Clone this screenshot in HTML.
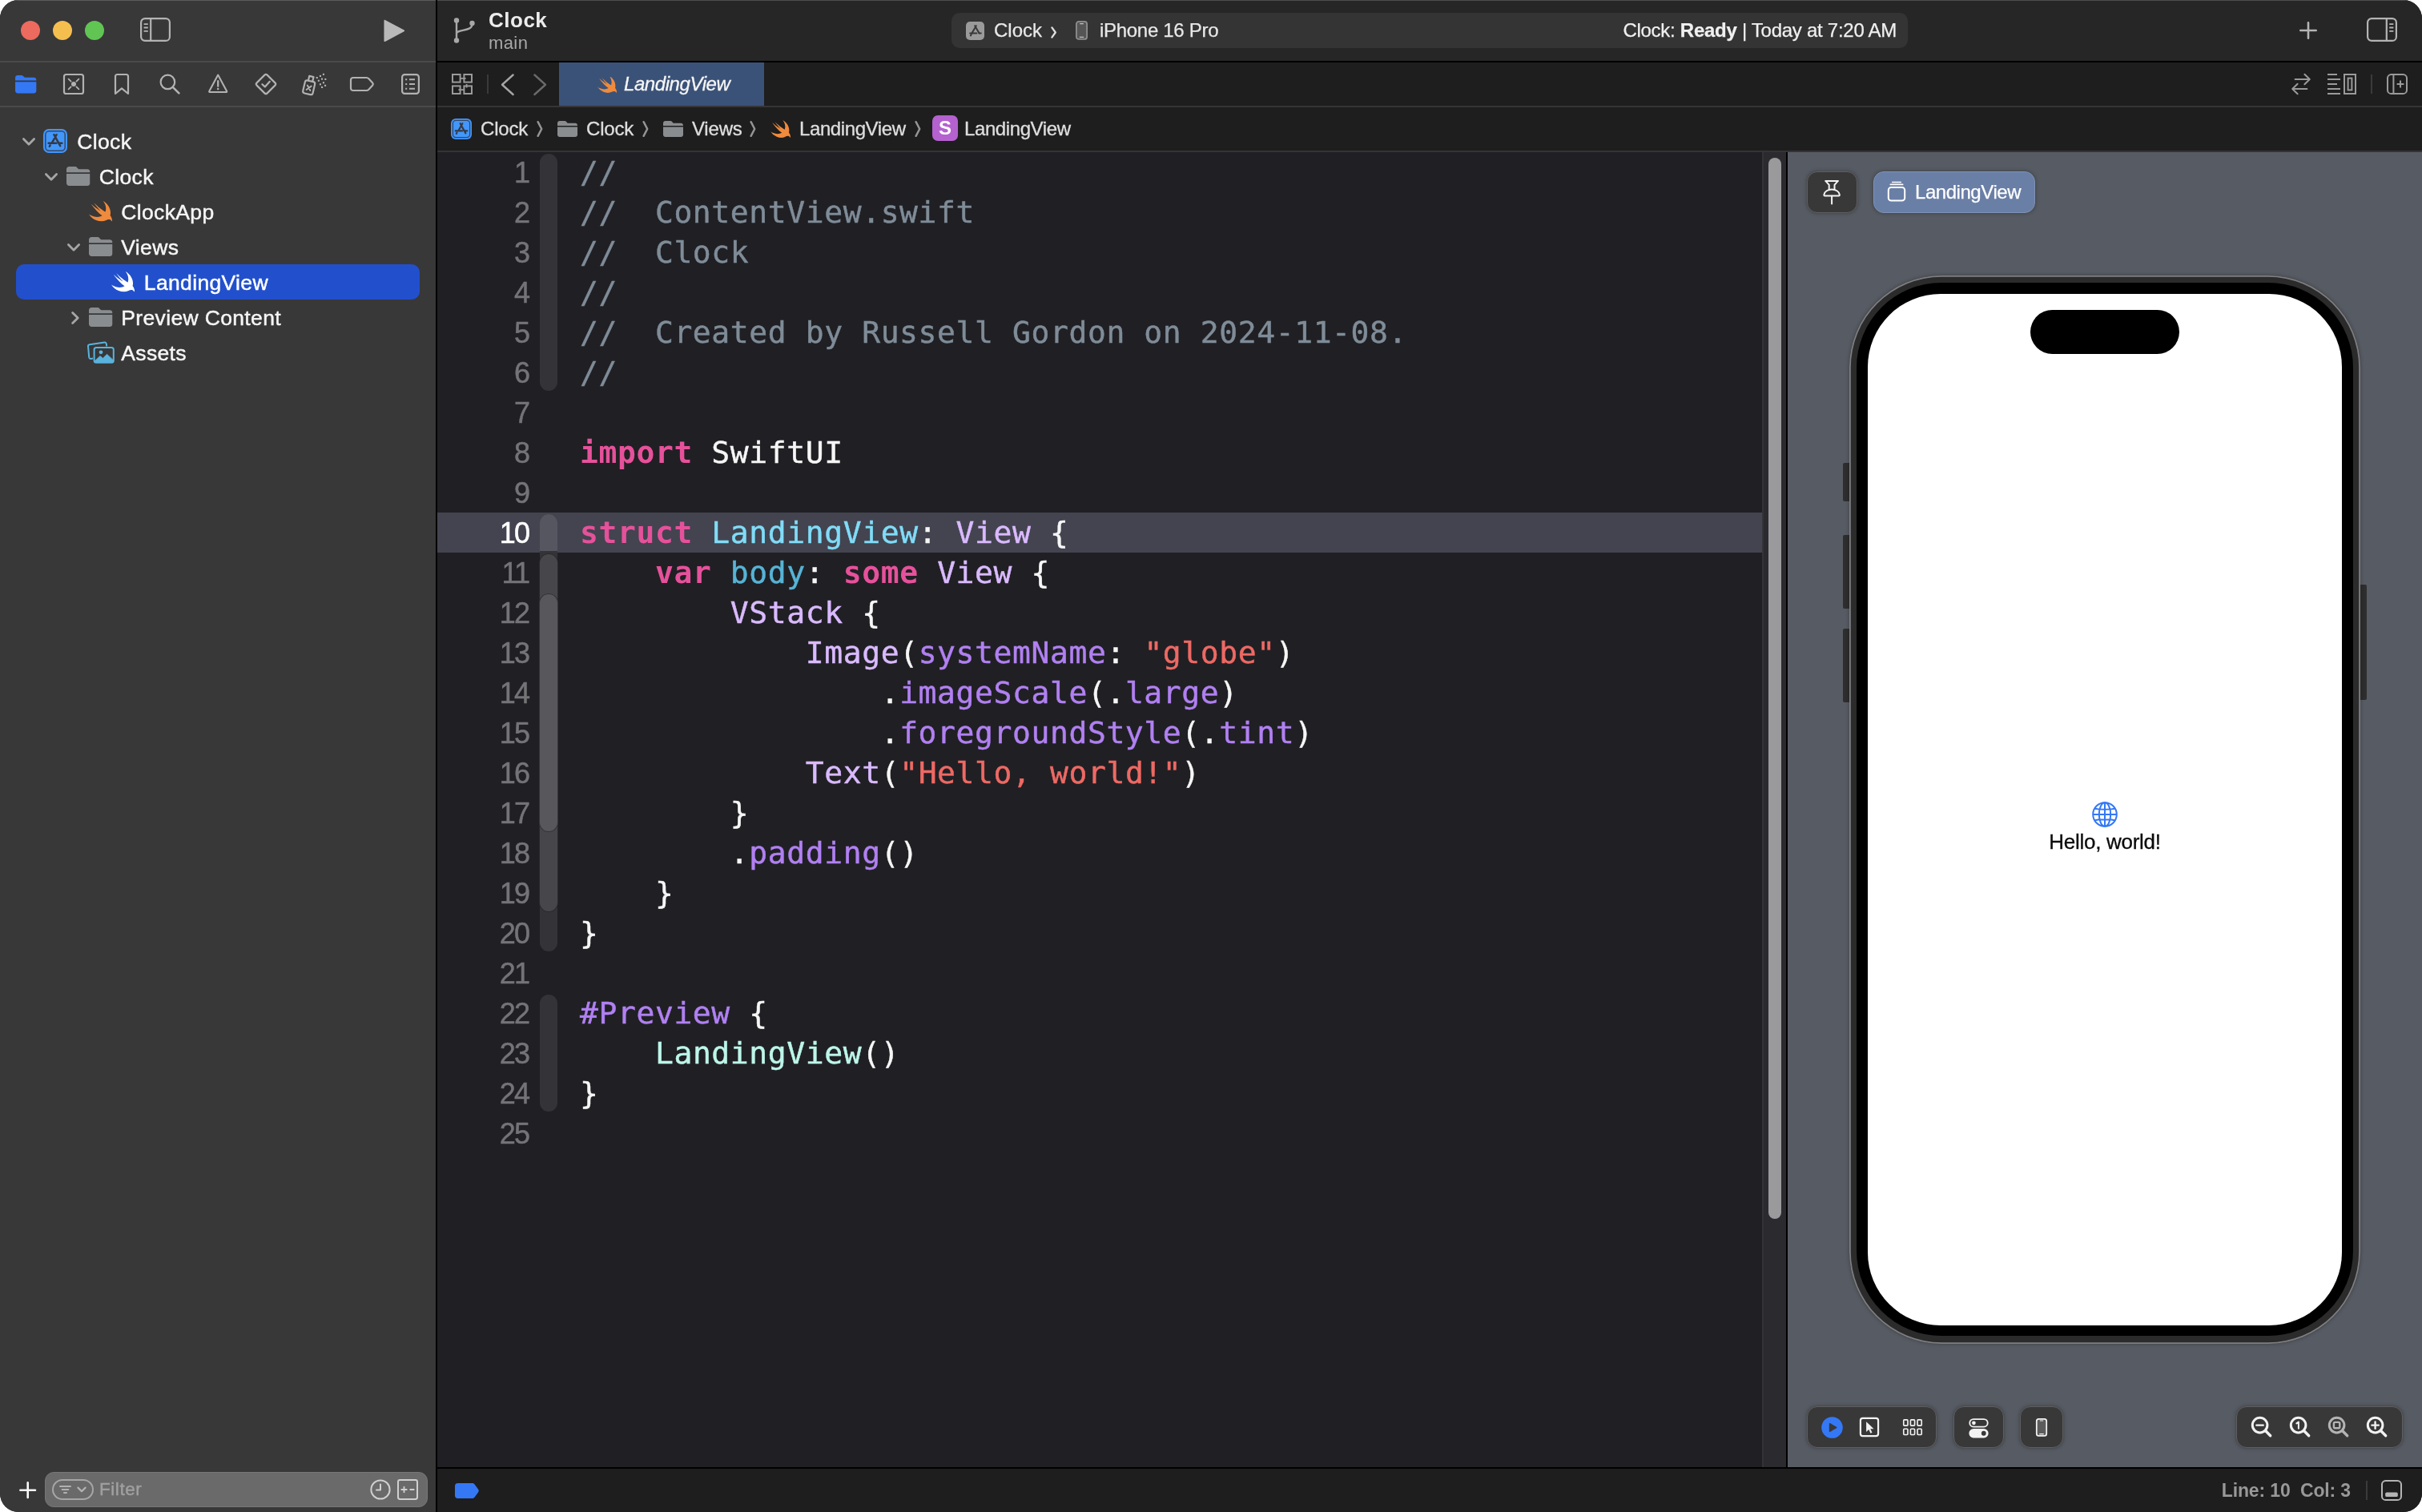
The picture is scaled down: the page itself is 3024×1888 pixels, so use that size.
<!DOCTYPE html>
<html lang="en">
<head>
<meta charset="utf-8">
<title>Clock — LandingView.swift</title>
<style>
*{box-sizing:border-box;margin:0;padding:0}
html,body{width:3024px;height:1888px;background:#fff}
body{overflow:hidden;position:relative}
body{font-family:"Liberation Sans",sans-serif;color:#e6e6e6;-webkit-font-smoothing:antialiased}
#win{will-change:transform;position:absolute;left:0;top:0;width:3024px;height:1888px;border-radius:23px;overflow:hidden;background:#1f1f24}
.abs{position:absolute}
svg{position:absolute;overflow:visible}
/* ---------- sidebar ---------- */
#sidebar{position:absolute;left:0;top:0;width:544px;height:1888px;background:#383838}
#vdiv{position:absolute;left:544px;top:0;width:2px;height:1888px;background:#000}
.hl{position:absolute;height:2px}
.tl{position:absolute;border-radius:50%;width:24px;height:24px;top:26px}
.row{position:absolute;left:0;width:544px;height:44px;font-size:26.5px;line-height:44px;color:#ececec;white-space:nowrap;letter-spacing:0.35px;-webkit-text-stroke:0.45px}
.row span{position:absolute;top:1px}
/* ---------- main ---------- */
#toolbar{position:absolute;left:546px;top:0;width:2478px;height:76px;background:#262626}
#tabbar{position:absolute;left:546px;top:78px;width:2478px;height:54px;background:#1e1e1e}
#crumbs{position:absolute;left:546px;top:134px;width:2478px;height:54px;background:#1e1e1e}
#editor{position:absolute;left:546px;top:190px;width:1654px;height:1642px;background:#202024;overflow:hidden}
#scroll{position:absolute;left:2200px;top:190px;width:30px;height:1642px;background:#2b2b2f;border-left:2px solid #343438}
#thumb{position:absolute;left:2208px;top:197px;width:16px;height:1325px;border-radius:8px;background:#9a9a9d}
#vdiv2{position:absolute;left:2230px;top:190px;width:2px;height:1642px;background:#000}
#canvas{position:absolute;left:2232px;top:190px;width:792px;height:1642px;background:#575b63;overflow:hidden}
#status{position:absolute;left:546px;top:1832px;width:2478px;height:56px;background:#1e1e1e;border-top:2px solid #000}
.cr{position:absolute;top:11px;font-size:24px;line-height:32px;color:#dedede;white-space:nowrap;letter-spacing:-0.2px;-webkit-text-stroke:0.35px}
.cv{position:absolute;top:17px;width:8px;height:20px}
.rb{position:absolute;left:128px;width:22px;border-radius:11px}
.cbtn{position:absolute;border-radius:13px;background:#383838;border:1px solid #5e5e5f;box-shadow:0 0 5px rgba(0,0,0,.35)}
.ln.cur i{color:#fff;-webkit-text-stroke-color:#fff}
/* code */
.ln{position:absolute;left:0;width:1654px;height:50px;white-space:pre;font-family:"DejaVu Sans Mono","Liberation Mono",monospace;font-size:38px;line-height:50px;color:#f6f6f6}
.ln i{position:absolute;left:0;top:1px;width:114.2px;text-align:right;letter-spacing:-1.8px;font-style:normal;font-family:"Liberation Sans",sans-serif;font-size:36px;color:#747478;-webkit-text-stroke:0.5px #747478}
.ln b{position:absolute;left:178px;top:0;font-weight:normal;letter-spacing:0.6px;-webkit-text-stroke:0.45px}
.k{color:#e6519b;font-weight:bold;-webkit-text-stroke:0}
.c{color:#7f8c98}
.t{color:#80dcf8}
.d{color:#56b4d6}
.s{color:#dabaff}
.f{color:#b180f2}
.q{color:#ee6964}
.p{color:#bdf6ea}
</style>
</head>
<body>
<div id="win">
<svg width="0" height="0" style="position:absolute">
  <defs>
    <symbol id="swift" viewBox="2.41 3.41 18.12 16.22" preserveAspectRatio="none">
      <path d="M13.543 3.41c4.114 2.47 6.545 7.162 5.549 11.131-.024.093-.05.181-.076.272l.002.001c2.062 2.538 1.5 5.258 1.236 4.745-1.072-2.086-3.066-1.568-4.088-1.043a6.803 6.803 0 0 1-.281.158l-.02.012-.002.002c-2.115 1.123-4.957 1.205-7.812-.022a12.568 12.568 0 0 1-5.64-4.838c.649.48 1.35.902 2.097 1.252 3.019 1.414 6.051 1.311 8.197-.002C9.651 12.73 7.101 9.67 5.146 7.191a10.628 10.628 0 0 1-1.005-1.384c2.34 2.142 6.038 4.83 7.365 5.576C8.69 8.408 6.208 4.743 6.324 4.86c4.436 4.47 8.528 6.996 8.528 6.996.154.085.27.154.36.213.085-.215.16-.437.224-.668.708-2.588-.09-5.548-1.893-7.992z"/>
    </symbol>
    <symbol id="folder" viewBox="0 0 30 24" preserveAspectRatio="none">
      <path d="M0 3.4C0 1.5 1.5 0 3.4 0H10.6C11.9 0 12.8 .5 13.6 1.4L14.6 2.6C15 3 15.4 3.2 16 3.2H26.6C28.5 3.2 30 4.7 30 6.6V7.2H0Z"/>
      <path d="M0 9H30V20.6C30 22.5 28.5 24 26.6 24H3.4C1.5 24 0 22.5 0 20.6Z"/>
    </symbol>
    <symbol id="appicon" viewBox="0 0 30 30">
      <rect x="0" y="0" width="30" height="30" rx="7" fill="#4196fb"/>
      <rect x="2.8" y="2.8" width="24.4" height="24.4" rx="4.4" fill="#4297fb" stroke="#354766" stroke-width="1.5"/>
      <path d="M16.6 7.2L10.6 17.8M13.4 7.2L21.2 21.2M6.6 17.8H16.4M19.8 17.8H23.4M8.6 20.4L7.8 21.8" fill="none" stroke="#353a44" stroke-width="2.5" stroke-linecap="round"/>
    </symbol>
  </defs>
</svg>
<div id="sidebar">
  <div class="hl" style="left:0;top:0;width:544px;height:1px;background:#5c5c5c"></div>
  <div class="tl" style="left:26px;background:#ed6a5e"></div>
  <div class="tl" style="left:66px;background:#f5bf4f"></div>
  <div class="tl" style="left:106px;background:#61c554"></div>
  <!-- sidebar toggle -->
  <svg style="left:175.2px;top:22px" width="38" height="30" viewBox="0 0 38 30" fill="none" stroke="#b4b4b4" stroke-width="2.2">
    <rect x="1.1" y="1.1" width="35.8" height="27.8" rx="5"/>
    <path d="M13.2 1.1V28.9"/>
    <path d="M4.6 8.2h5.2M4.6 12.5h5.2M4.6 16.8h5.2" stroke-width="1.8"/>
  </svg>
  <!-- run -->
  <svg style="left:478.6px;top:23.6px" width="26.6" height="28.8" viewBox="0 0 28 29" preserveAspectRatio="none"><path d="M1.5 1.8L26.5 14.5L1.5 27.2Z" fill="#b9b9b9" stroke="#b9b9b9" stroke-width="2" stroke-linejoin="round"/></svg>
  <div class="hl" style="left:0;top:76px;width:544px;background:#4a4a4a"></div>
  <!-- navigator icons -->
  <svg style="left:19px;top:94px" width="26.4" height="22.4" viewBox="0 0 27 23"><path d="M0 3.2C0 1.3 1.3 0 3.2 0H7.6C8.8 0 9.6 .4 10.4 1.2L11.2 2C11.8 2.6 12.4 2.8 13.2 2.8H23.8C25.7 2.8 27 4.1 27 6V6.6H0Z" fill="#3478f6"/><path d="M0 8.6H27V19.8C27 21.7 25.7 23 23.8 23H3.2C1.3 23 0 21.7 0 19.8Z" fill="#3478f6"/></svg>
  <svg style="left:79px;top:92px" width="26" height="26" viewBox="0 0 26 26" fill="none" stroke="#b2b2b2" stroke-width="2.2" stroke-linecap="round">
    <rect x="1" y="1" width="24" height="24" rx="2.6"/><circle cx="13" cy="13" r="3" fill="#b2b2b2" stroke="none"/>
    <path d="M6.6 6.6L9.6 9.6M19.4 6.6L16.4 9.6M6.6 19.4L9.6 16.4M19.4 19.4L16.4 16.4" stroke-width="1.8"/>
  </svg>
  <svg style="left:143px;top:92px" width="18" height="26" viewBox="0 0 18 26" fill="none" stroke="#b2b2b2" stroke-width="2.2" stroke-linejoin="round"><path d="M1 3.4C1 2 2 1 3.4 1H14.6C16 1 17 2 17 3.4V25L9 18.4L1 25Z"/></svg>
  <svg style="left:199px;top:92px" width="26" height="26" viewBox="0 0 26 26" fill="none" stroke="#b2b2b2" stroke-width="2.2" stroke-linecap="round"><circle cx="10.4" cy="10.4" r="8.8"/><path d="M16.8 16.8L24.4 24.4" stroke-width="2.6"/></svg>
  <svg style="left:260px;top:92px" width="24.4" height="24.4" viewBox="0 0 26 25" preserveAspectRatio="none" fill="none" stroke="#b2b2b2" stroke-width="2.2" stroke-linejoin="round" stroke-linecap="round"><path d="M13 1.6L24.6 22.2C25 23 24.6 23.6 23.8 23.6H2.2C1.4 23.6 1 23 1.4 22.2Z"/><path d="M13 9.4V16" stroke-width="2.4"/><circle cx="13" cy="19.6" r="1.3" fill="#b2b2b2" stroke="none"/></svg>
  <svg style="left:318px;top:91px" width="28" height="28" viewBox="0 0 28 28" fill="none" stroke="#b2b2b2" stroke-width="2.2" stroke-linejoin="round" stroke-linecap="round"><path d="M12.4 2.6Q14 1 15.6 2.6L25.4 12.4Q27 14 25.4 15.6L15.6 25.4Q14 27 12.4 25.4L2.6 15.6Q1 14 2.6 12.4Z"/><path d="M9.4 14.2L12.8 17.4L18.8 10.8"/></svg>
  <svg style="left:376px;top:90px" width="34" height="32" viewBox="0 0 34 32" fill="none" stroke="#b2b2b2" stroke-width="2.2" stroke-linejoin="round" stroke-linecap="round">
    <g transform="translate(9.7 19.3) rotate(13)"><rect x="-6.3" y="-8.2" width="12.6" height="16.4" rx="2.6"/><path d="M-2.7 -8.4V-14.2H2.7V-8.4"/><path d="M-2.5 -2.3L2.5 3.3M2.5 -2.3L-2.5 3.3" stroke-width="1.9"/></g>
    <g fill="#b2b2b2" stroke="none"><rect x="26.9" y="1.8" width="2.1" height="2.1"/><rect x="22.9" y="3.9" width="2.1" height="2.1"/><rect x="18.7" y="6.0" width="2.1" height="2.1"/><rect x="25.0" y="7.6" width="2.1" height="2.1"/><rect x="29.3" y="7.9" width="2.1" height="2.1"/><rect x="20.8" y="9.7" width="2.1" height="2.1"/><rect x="26.9" y="12.2" width="2.1" height="2.1"/><rect x="22.9" y="14.3" width="2.1" height="2.1"/><rect x="29.0" y="15.8" width="2.1" height="2.1"/><rect x="25.0" y="17.9" width="2.1" height="2.1"/></g>
  </svg>
  <svg style="left:437px;top:96px" width="30" height="18" viewBox="0 0 30 18" fill="none" stroke="#b2b2b2" stroke-width="2.2" stroke-linejoin="round"><path d="M4 1H20.6C21.8 1 22.6 1.4 23.4 2.2L28.2 7.4C29 8.4 29 9.6 28.2 10.6L23.4 15.8C22.6 16.6 21.8 17 20.6 17H4C2.2 17 1 15.8 1 14V4C1 2.2 2.2 1 4 1Z"/></svg>
  <svg style="left:501px;top:92px" width="23" height="26" viewBox="0 0 23 26" fill="none" stroke="#b2b2b2" stroke-width="2.2" stroke-linecap="round"><rect x="1.1" y="1.1" width="20.8" height="23.8" rx="3.2"/><path d="M10 7.2H17M10 13H17M10 18.8H17" stroke-width="2" stroke-linecap="butt"/><path d="M5.2 7.2H7.2M5.2 13H7.2M5.2 18.8H7.2" stroke-width="2" stroke-linecap="butt"/></svg>
  <div class="hl" style="left:0;top:132px;width:544px;background:#4a4a4a"></div>
  <!-- project tree -->
  <div class="abs" style="left:20px;top:330px;width:504px;height:44px;border-radius:10px;background:#2250cc"></div>
  <div class="row" style="top:154px">
    <svg style="left:28px;top:18.4px" width="16" height="10" viewBox="0 0 16 10" fill="none" stroke="#a6a6a6" stroke-width="2.8" stroke-linecap="round" stroke-linejoin="round"><path d="M1.4 1.6L8 8.2L14.6 1.6"/></svg>
    <svg style="left:54px;top:7px" width="30" height="30" viewBox="0 0 30 30"><use href="#appicon" width="30" height="30"/></svg>
    <span style="left:96.3px;color:#f6f6f6">Clock</span>
  </div>
  <div class="row" style="top:198px">
    <svg style="left:56px;top:18.4px" width="16" height="10" viewBox="0 0 16 10" fill="none" stroke="#a6a6a6" stroke-width="2.8" stroke-linecap="round" stroke-linejoin="round"><path d="M1.4 1.6L8 8.2L14.6 1.6"/></svg>
    <svg style="left:83px;top:10px" width="29.5" height="24" viewBox="0 0 29.5 24"><use href="#folder" width="29.5" height="24" fill="#8a8d90"/></svg>
    <span style="left:123.8px;color:#f6f6f6">Clock</span>
  </div>
  <div class="row" style="top:242px">
    <svg style="left:111px;top:9px" width="29" height="25.5" viewBox="0 0 29 25.5"><use href="#swift" width="29" height="25.5" fill="#f08a3c"/></svg>
    <span style="left:151.3px;color:#f6f6f6">ClockApp</span>
  </div>
  <div class="row" style="top:286px">
    <svg style="left:84px;top:18.4px" width="16" height="10" viewBox="0 0 16 10" fill="none" stroke="#a6a6a6" stroke-width="2.8" stroke-linecap="round" stroke-linejoin="round"><path d="M1.4 1.6L8 8.2L14.6 1.6"/></svg>
    <svg style="left:110.5px;top:10px" width="29.5" height="24" viewBox="0 0 29.5 24"><use href="#folder" width="29.5" height="24" fill="#8a8d90"/></svg>
    <span style="left:151.3px;color:#f6f6f6">Views</span>
  </div>
  <div class="row" style="top:330px">
    <svg style="left:139px;top:9px" width="29" height="25.5" viewBox="0 0 29 25.5"><use href="#swift" width="29" height="25.5" fill="#fff"/></svg>
    <span style="left:179.8px;color:#fff">LandingView</span>
  </div>
  <div class="row" style="top:374px">
    <svg style="left:89px;top:14.6px" width="10" height="16" viewBox="0 0 10 16" fill="none" stroke="#a6a6a6" stroke-width="2.8" stroke-linecap="round" stroke-linejoin="round"><path d="M1.6 1.4L8.2 8L1.6 14.6"/></svg>
    <svg style="left:110.5px;top:10px" width="29.5" height="24" viewBox="0 0 29.5 24"><use href="#folder" width="29.5" height="24" fill="#8a8d90"/></svg>
    <span style="left:151.3px;color:#f6f6f6">Preview Content</span>
  </div>
  <div class="row" style="top:418px">
    <svg style="left:109px;top:8px" width="34" height="28" viewBox="0 0 34 28" fill="none" stroke="#5ab3dd" stroke-width="2" stroke-linejoin="round">
      <path d="M7 21.6L4.4 21.9C3.2 22 2.4 21.4 2.2 20.2L1 6.4C.9 5.2 1.6 4.4 2.8 4.2L21.6 1.6C22.8 1.5 23.6 2.1 23.8 3.3L24.2 6.4"/>
      <rect x="8.6" y="8" width="24.2" height="18.8" rx="2.6"/>
      <path d="M9.6 24.6L16 18.6L19.4 21.4L24.6 16.4L32 23.4V24.4C32 25.8 31.4 26.2 30 26.2H11.4C10.2 26.2 9.6 25.6 9.6 24.6Z" fill="#5ab3dd" stroke-width="1"/>
      <circle cx="17" cy="13.8" r="2.4" fill="#5ab3dd" stroke="none"/>
    </svg>
    <span style="left:151.3px;color:#f6f6f6">Assets</span>
  </div>
  <!-- bottom filter bar -->
  <svg style="left:23.8px;top:1849.8px" width="21.4" height="21.4" viewBox="0 0 21.4 21.4" fill="none" stroke="#fafafa" stroke-width="2.6" stroke-linecap="round"><path d="M10.7 1.4V20M1.4 10.7H20"/></svg>
  <div class="abs" style="left:56px;top:1838px;width:478px;height:44px;border-radius:11px;background:#6a6a6a;border:1px solid #777"></div>
  <div class="abs" style="left:65px;top:1847px;width:52px;height:26px;border-radius:13px;border:2px solid #a6a6a6"></div>
  <svg style="left:74px;top:1853px" width="36" height="14" viewBox="0 0 36 14" fill="none" stroke="#b2b2b2" stroke-width="2" stroke-linecap="round" stroke-linejoin="round"><path d="M1 3H14M3.6 7H11.4M6 11H9"/><path d="M23.4 4.6L28 9.2L32.6 4.6" stroke-width="2.2"/></svg>
  <div class="abs" style="left:124px;top:1843.5px;font-size:22.5px;line-height:32px;color:#a0a0a0;letter-spacing:0.55px;-webkit-text-stroke:0.4px">Filter</div>
  <svg style="left:462px;top:1847px" width="26" height="26" viewBox="0 0 26 26" fill="none" stroke="#d0d0d0" stroke-width="2" stroke-linecap="round" stroke-linejoin="round"><circle cx="13" cy="13" r="11.6"/><path d="M13 6.4V13.4H8"/></svg>
  <svg style="left:496px;top:1847px" width="26" height="26" viewBox="0 0 26 26" fill="none" stroke="#d0d0d0" stroke-width="2"><rect x="1" y="1" width="24" height="24" rx="2.4"/><path d="M4.6 13H12.4M8.5 9.1V16.9M15.6 13H21.4" stroke-width="1.8"/></svg>
</div>
<div id="vdiv"></div>
<div id="toolbar">
  <div class="hl" style="left:0;top:0;width:2478px;height:1px;background:#4e4e4e"></div>
  <!-- branch icon -->
  <svg style="left:19px;top:20px" width="30" height="36" viewBox="0 0 30 36" fill="none" stroke="#a8a8a8" stroke-width="2.4">
    <circle cx="5" cy="5.5" r="3.2" fill="#a8a8a8" stroke="none"/>
    <circle cx="5" cy="30.5" r="3.2" fill="#a8a8a8" stroke="none"/>
    <circle cx="24.5" cy="9" r="3.2" fill="#a8a8a8" stroke="none"/>
    <path d="M5 6V30M5 22C5 16 24.5 20 24.5 10"/>
  </svg>
  <div class="abs" style="left:64px;top:9px;font-size:26px;line-height:32px;font-weight:bold;color:#ececec;letter-spacing:0.5px">Clock</div>
  <div class="abs" style="left:64px;top:40px;font-size:22px;line-height:28px;color:#a8a8a8;letter-spacing:0.4px">main</div>
  <!-- scheme pill -->
  <div class="abs" style="left:642px;top:16px;width:1194px;height:44px;border-radius:10px;background:#343434"></div>
  <div class="abs" style="left:660px;top:27px;width:23px;height:23px;border-radius:5px;background:#9a9a9a"></div>
  <svg style="left:662.5px;top:29px" width="18" height="18" viewBox="0 0 18 18" fill="none" stroke="#383838" stroke-width="2" stroke-linecap="round">
    <path d="M9.8 3.2L4.4 12.6M8.2 3.2L13.6 12.6M2.2 12.6H10.4M13.2 12.6H15.8M3.6 14.2L2.9 15.4"/>
  </svg>
  <div class="abs" style="left:695px;top:22px;font-size:24px;line-height:32px;color:#e8e8e8;-webkit-text-stroke:0.25px">Clock</div>
  <svg style="left:766px;top:32.6px" width="8" height="15" viewBox="0 0 8 15" fill="none" stroke="#e0e0e0" stroke-width="2.3" stroke-linecap="round" stroke-linejoin="round"><path d="M1.4 1.4L5.8 7.5L1.4 13.6"/></svg>
  <svg style="left:797px;top:26.4px" width="15" height="24" viewBox="0 0 15 24" fill="none">
    <rect x=".9" y=".9" width="13.2" height="22" rx="3" fill="#555" stroke="#8e8e8e" stroke-width="1.8"/>
    <path d="M5.2 3.6h4.6M4.8 20.4h5.4" stroke="#c4c4c4" stroke-width="1.2"/>
  </svg>
  <div class="abs" style="left:827px;top:22px;font-size:24px;line-height:32px;color:#e8e8e8;letter-spacing:-0.3px;-webkit-text-stroke:0.25px">iPhone 16 Pro</div>
  <div class="abs" style="left:1422px;top:22px;width:400px;text-align:right;font-size:24px;line-height:32px;color:#f0f0f0;white-space:nowrap;letter-spacing:-0.27px;-webkit-text-stroke:0.25px">Clock: <b>Ready</b> | Today at 7:20 AM</div>
  <!-- plus -->
  <svg style="left:2325px;top:27px" width="22" height="22" viewBox="0 0 22 22" fill="none" stroke="#b4b4b4" stroke-width="2.6" stroke-linecap="round"><path d="M11 1.3V20.7M1.3 11H20.7"/></svg>
  <!-- right panel toggle -->
  <svg style="left:2409px;top:22px" width="38" height="30" viewBox="0 0 38 30" fill="none" stroke="#b4b4b4" stroke-width="2.2">
    <rect x="1.1" y="1.1" width="35.8" height="27.8" rx="5"/>
    <path d="M24.8 1.1V28.9"/>
    <path d="M28.2 8.2h5.2M28.2 12.5h5.2M28.2 16.8h5.2" stroke-width="1.8"/>
  </svg>
</div>
<div class="hl" style="left:546px;top:76px;width:2478px;background:#000"></div>
<div id="tabbar">
  <!-- grid / related items icon -->
  <svg style="left:18px;top:14px" width="26" height="26" viewBox="0 0 26 26" fill="none" stroke="#9a9a9a" stroke-width="2">
    <rect x="1" y="1" width="9.6" height="9.6"/><rect x="15.4" y="1" width="9.6" height="9.6"/>
    <rect x="1" y="15.4" width="9.6" height="9.6"/><rect x="15.4" y="15.4" width="9.6" height="9.6"/>
    <path d="M10.6 5.8H17.6M8.4 20.2H15.4M18.6 13V17.6" stroke-width="1.8"/>
  </svg>
  <div class="abs" style="left:62px;top:15px;width:2px;height:24px;background:#3a3a3a"></div>
  <svg style="left:79px;top:13.6px" width="18" height="27.4" viewBox="0 0 18 26" preserveAspectRatio="none" fill="none" stroke="#a6a6a6" stroke-width="2.4" stroke-linecap="round" stroke-linejoin="round"><path d="M15.6 1.4L2 13L15.6 24.6"/></svg>
  <svg style="left:119px;top:13.6px" width="18" height="27.4" viewBox="0 0 18 26" preserveAspectRatio="none" fill="none" stroke="#6a6a6a" stroke-width="2.4" stroke-linecap="round" stroke-linejoin="round"><path d="M2.4 1.4L16 13L2.4 24.6"/></svg>
  <!-- active tab -->
  <div class="abs" style="left:152px;top:0;width:256px;height:54px;background:#3b5278"></div>
  <svg style="left:200px;top:17px" width="24" height="21" viewBox="0 0 24 21"><use href="#swift" width="24" height="21" fill="#f08a3c"/></svg>
  <div class="abs" style="left:233px;top:11px;font-size:24px;line-height:32px;font-style:italic;color:#f6f6f6;letter-spacing:-0.42px;-webkit-text-stroke:0.3px">LandingView</div>
  <!-- right icons -->
  <svg style="left:2314px;top:14px" width="26" height="26" viewBox="0 0 26 26" fill="none" stroke="#9a9a9a" stroke-width="2" stroke-linecap="round" stroke-linejoin="round">
    <path d="M5.6 7H23.6M17.4 .8L23.8 7L17.4 13.2M20.4 19H2.4M8.6 12.8L2.2 19L8.6 25.2"/>
  </svg>
  <svg style="left:2360px;top:14px" width="36" height="26" viewBox="0 0 36 26" fill="none" stroke="#9a9a9a" stroke-width="2">
    <path d="M0 1H12M0 7H16M0 13H12M0 19H16M0 25H16"/>
    <rect x="21" y="1" width="14" height="24"/><rect x="25.6" y="5.6" width="4.8" height="14.8"/>
  </svg>
  <div class="abs" style="left:2414px;top:15px;width:2px;height:24px;background:#3a3a3a"></div>
  <svg style="left:2434px;top:14px" width="26" height="26" viewBox="0 0 26 26" fill="none" stroke="#9a9a9a" stroke-width="2">
    <rect x="1" y="1" width="24" height="24" rx="4.6"/>
    <path d="M8.4 1V25M17 8.6V17.4M12.6 13H21.4"/>
  </svg>
</div>
<div class="hl" style="left:546px;top:132px;width:2478px;background:#353535"></div>
<div id="crumbs">
  <svg style="left:17px;top:14px" width="26" height="26" viewBox="0 0 30 30"><use href="#appicon" width="30" height="30"/></svg>
  <div class="cr" style="left:54px">Clock</div><svg class="cv" style="left:124px" viewBox="0 0 8 20" fill="none" stroke="#949494" stroke-width="2.5" stroke-linecap="round" stroke-linejoin="round"><path d="M1.6 1.2L6.2 10L1.6 18.8"/></svg>
  <svg style="left:150px;top:17px" width="25" height="20" viewBox="0 0 25 20"><use href="#folder" width="25" height="20" fill="#8a8d90"/></svg>
  <div class="cr" style="left:186px">Clock</div><svg class="cv" style="left:256px" viewBox="0 0 8 20" fill="none" stroke="#949494" stroke-width="2.5" stroke-linecap="round" stroke-linejoin="round"><path d="M1.6 1.2L6.2 10L1.6 18.8"/></svg>
  <svg style="left:282px;top:17px" width="25" height="20" viewBox="0 0 25 20"><use href="#folder" width="25" height="20" fill="#8a8d90"/></svg>
  <div class="cr" style="left:318px">Views</div><svg class="cv" style="left:390px" viewBox="0 0 8 20" fill="none" stroke="#949494" stroke-width="2.5" stroke-linecap="round" stroke-linejoin="round"><path d="M1.6 1.2L6.2 10L1.6 18.8"/></svg>
  <svg style="left:416px;top:16px" width="25" height="22" viewBox="0 0 25 22"><use href="#swift" width="25" height="22" fill="#f08a3c"/></svg>
  <div class="cr" style="left:452px;letter-spacing:-0.4px">LandingView</div><svg class="cv" style="left:596px" viewBox="0 0 8 20" fill="none" stroke="#949494" stroke-width="2.5" stroke-linecap="round" stroke-linejoin="round"><path d="M1.6 1.2L6.2 10L1.6 18.8"/></svg>
  <div class="abs" style="left:618px;top:10px;width:32px;height:32px;border-radius:7px;background:#b561cf;color:#fff;font-weight:bold;font-size:24px;line-height:32px;text-align:center">S</div>
  <div class="cr" style="left:658px;letter-spacing:-0.4px">LandingView</div>
</div>
<div class="hl" style="left:546px;top:188px;width:2478px;background:#343436"></div>
<div id="editor">
  <div class="abs" style="left:0;top:450px;width:1654px;height:50px;background:#434450"></div>
  <!-- fold ribbons -->
  <div class="rb" style="top:2px;height:296px;background:#343438"></div>
  <div class="rb" style="top:452px;height:546px;background:#343438"></div>
  <div class="rb" style="top:452px;height:46px;background:#555660;border-radius:11px 11px 0 0"></div>
  <div class="rb" style="top:502px;height:446px;background:#46464b;box-shadow:0 0 0 1px #2a2a2e"></div>
  <div class="rb" style="top:552px;height:296px;background:#57575c;box-shadow:0 0 0 1px #343438"></div>
  <div class="rb" style="top:1052px;height:146px;background:#343438"></div>
<div class="ln" style="top:0px"><i>1</i><b><span class="c">//</span></b></div>
<div class="ln" style="top:50px"><i>2</i><b><span class="c">//  ContentView.swift</span></b></div>
<div class="ln" style="top:100px"><i>3</i><b><span class="c">//  Clock</span></b></div>
<div class="ln" style="top:150px"><i>4</i><b><span class="c">//</span></b></div>
<div class="ln" style="top:200px"><i>5</i><b><span class="c">//  Created by Russell Gordon on 2024-11-08.</span></b></div>
<div class="ln" style="top:250px"><i>6</i><b><span class="c">//</span></b></div>
<div class="ln" style="top:300px"><i>7</i><b></b></div>
<div class="ln" style="top:350px"><i>8</i><b><span class="k">import</span> SwiftUI</b></div>
<div class="ln" style="top:400px"><i>9</i><b></b></div>
<div class="ln cur" style="top:450px"><i>10</i><b><span class="k">struct</span> <span class="t">LandingView</span>: <span class="s">View</span> {</b></div>
<div class="ln" style="top:500px"><i>11</i><b>    <span class="k">var</span> <span class="d">body</span>: <span class="k">some</span> <span class="s">View</span> {</b></div>
<div class="ln" style="top:550px"><i>12</i><b>        <span class="s">VStack</span> {</b></div>
<div class="ln" style="top:600px"><i>13</i><b>            <span class="s">Image</span>(<span class="f">systemName</span>: <span class="q">"globe"</span>)</b></div>
<div class="ln" style="top:650px"><i>14</i><b>                .<span class="f">imageScale</span>(.<span class="f">large</span>)</b></div>
<div class="ln" style="top:700px"><i>15</i><b>                .<span class="f">foregroundStyle</span>(.<span class="f">tint</span>)</b></div>
<div class="ln" style="top:750px"><i>16</i><b>            <span class="s">Text</span>(<span class="q">"Hello, world!"</span>)</b></div>
<div class="ln" style="top:800px"><i>17</i><b>        }</b></div>
<div class="ln" style="top:850px"><i>18</i><b>        .<span class="f">padding</span>()</b></div>
<div class="ln" style="top:900px"><i>19</i><b>    }</b></div>
<div class="ln" style="top:950px"><i>20</i><b>}</b></div>
<div class="ln" style="top:1000px"><i>21</i><b></b></div>
<div class="ln" style="top:1050px"><i>22</i><b><span class="f">#Preview</span> {</b></div>
<div class="ln" style="top:1100px"><i>23</i><b>    <span class="p">LandingView</span>()</b></div>
<div class="ln" style="top:1150px"><i>24</i><b>}</b></div>
<div class="ln" style="top:1200px"><i>25</i><b></b></div>
</div>
<div id="scroll"></div>
<div id="thumb"></div>
<div id="vdiv2"></div>
<div id="canvas">
  <!-- pin -->
  <div class="cbtn" style="left:24px;top:24px;width:63px;height:52px"></div>
  <svg style="left:43px;top:33px" width="24" height="33" viewBox="0 0 24 33" fill="none" stroke="#f4f4f4" stroke-width="2" stroke-linejoin="round" stroke-linecap="round">
    <path d="M4.2 3H20M5 3.6L8.7 7.8V14M19.2 3.6L15.5 7.8V14"/>
    <path d="M2.4 20.2C3.4 11.4 20.8 11.4 21.8 20.2Q21.9 21.4 20.8 21.4H3.4Q2.3 21.4 2.4 20.2Z"/>
    <path d="M12.1 21.8V31.4"/>
  </svg>
  <!-- LandingView chip -->
  <div class="cbtn" style="left:107px;top:24px;width:202px;height:52px;background:#6a7fa6;border-color:#7f92b5"></div>
  <svg style="left:124px;top:36px" width="24" height="26" viewBox="0 0 24 26" fill="none" stroke="#fff" stroke-width="2" stroke-linecap="round">
    <rect x="1.8" y="8" width="20.4" height="16.6" rx="3.4"/>
    <path d="M4.4 4.4H19.6" stroke-width="1.8"/><path d="M6.6 1.4H17.4" stroke-width="1.5"/>
  </svg>
  <div class="abs" style="left:159px;top:34px;font-size:24px;line-height:32px;color:#fff;letter-spacing:-0.45px;-webkit-text-stroke:0.25px">LandingView</div>
  <!-- phone -->
  <div class="abs" style="left:69px;top:388px;width:10px;height:48px;background:#2e2e2f;border-radius:2px 0 0 2px"></div>
  <div class="abs" style="left:69px;top:478px;width:10px;height:92px;background:#2e2e2f;border-radius:2px 0 0 2px"></div>
  <div class="abs" style="left:69px;top:595px;width:10px;height:92px;background:#2e2e2f;border-radius:2px 0 0 2px"></div>
  <div class="abs" style="left:713px;top:540px;width:10px;height:144px;background:#2e2e2f;border-radius:0 2px 2px 0"></div>
  <div class="abs" style="left:76.8px;top:154px;width:638.4px;height:1333.6px;border-radius:115px;background:#2b2b2c;box-shadow:0 0 0 1.8px #7e7e80 inset,0 0 5px rgba(0,0,0,.3)"></div>
  <div class="abs" style="left:86px;top:163.4px;width:620px;height:1314.8px;border-radius:106px;background:#000"></div>
  <div class="abs" style="left:100px;top:176.8px;width:592px;height:1288px;border-radius:91px;background:#fff"></div>
  <div class="abs" style="left:303px;top:197px;width:186px;height:55px;border-radius:28px;background:#000"></div>
  <!-- globe -->
  <svg style="left:380px;top:810.8px" width="32" height="32" viewBox="0 0 32 32" fill="none" stroke="#3478f6" stroke-width="2">
    <circle cx="16" cy="16" r="14.8"/>
    <ellipse cx="16" cy="16" rx="7.2" ry="14.8"/>
    <path d="M16 1.2V30.8M1.2 16H30.8M3.4 8.4C7 10.2 25 10.2 28.6 8.4M3.4 23.6C7 21.8 25 21.8 28.6 23.6"/>
  </svg>
  <div class="abs" style="left:246px;top:845px;width:300px;text-align:center;font-size:26px;line-height:32px;color:#0a0a0a;letter-spacing:-0.28px;-webkit-text-stroke:0.3px">Hello, world!</div>
  <!-- canvas bottom toolbar -->
  <div class="cbtn" style="left:24px;top:1566px;width:162px;height:52px"></div>
  <div class="cbtn" style="left:207px;top:1566px;width:63px;height:52px"></div>
  <div class="cbtn" style="left:290px;top:1566px;width:54px;height:52px"></div>
  <div class="cbtn" style="left:560px;top:1566px;width:208px;height:52px"></div>
  <svg style="left:42px;top:1579px" width="27" height="27" viewBox="0 0 27 27"><circle cx="13.5" cy="13.5" r="13.3" fill="#3478f6"/><path d="M10.6 8.8L18.6 13.5L10.6 18.2Z" fill="#383838" stroke="#383838" stroke-width="1.6" stroke-linejoin="round"/></svg>
  <svg style="left:90px;top:1580px" width="24" height="24" viewBox="0 0 26 26" fill="none" stroke="#f2f2f2" stroke-width="2.4"><rect x="1" y="1" width="24" height="24" rx="3"/><path d="M8.8 5.6V19.4L12.2 16.2L14.6 21.4L16.8 20.4L14.4 15.4H19Z" fill="#f2f2f2" stroke="none"/></svg>
  <svg style="left:143.5px;top:1582px" width="24" height="20.4" viewBox="0 0 25 21" fill="none" stroke="#f2f2f2" stroke-width="1.7"><rect x=".8" y=".8" width="5.4" height="7.6" rx="1"/><rect x="9.8" y=".8" width="5.4" height="7.6" rx="1"/><rect x="18.8" y=".8" width="5.4" height="7.6" rx="1"/><rect x=".8" y="12.6" width="5.4" height="7.6" rx="1"/><rect x="9.8" y="12.6" width="5.4" height="7.6" rx="1"/><rect x="18.8" y="12.6" width="5.4" height="7.6" rx="1"/></svg>
  <svg style="left:226px;top:1580.5px" width="25" height="24.6" viewBox="0 0 27 27" fill="none" stroke="#f2f2f2" stroke-width="2"><rect x="1.2" y="1.2" width="24.6" height="10.4" rx="5.2"/><circle cx="6.8" cy="6.4" r="2.6" fill="#f2f2f2" stroke="none"/><rect x=".2" y="14.4" width="26.6" height="12.4" rx="6.2" fill="#f2f2f2" stroke="none"/><circle cx="20.4" cy="20.6" r="3.2" fill="#383838" stroke="none"/></svg>
  <svg style="left:310px;top:1580.8px" width="14" height="22.8" viewBox="0 0 16 26" fill="none" stroke="#f2f2f2" stroke-width="2"><rect x=".9" y=".9" width="14.2" height="24.2" rx="3" fill="#5c5c5c"/><path d="M5.6 3.4H10.4M4.8 22.4H11.2" stroke-width="1.2"/></svg>
  <svg style="left:579.1px;top:1578.8px" width="27" height="27" viewBox="0 0 27 27" fill="none" stroke="#f2f2f2" stroke-width="3" stroke-linecap="round"><circle cx="10.6" cy="10.6" r="9.3"/><path d="M17.8 17.8L23.7 23.7" stroke-width="3.4"/><path d="M6.4 10.6H14.8" stroke-width="2.4"/></svg>
  <svg style="left:627.0px;top:1578.8px" width="27" height="27" viewBox="0 0 27 27" fill="none" stroke="#f2f2f2" stroke-width="3" stroke-linecap="round"><circle cx="10.6" cy="10.6" r="9.3"/><path d="M17.8 17.8L23.7 23.7" stroke-width="3.4"/><path d="M8.4 8.4L10.9 6.6V14.8" stroke-width="2" stroke-linejoin="round"/></svg>
  <svg style="left:675.2px;top:1578.8px" width="27" height="27" viewBox="0 0 27 27" fill="none" stroke="#b4b4b4" stroke-width="3" stroke-linecap="round"><circle cx="10.6" cy="10.6" r="9.3"/><path d="M17.8 17.8L23.7 23.7" stroke-width="3.4"/><rect x="6.9" y="6.9" width="7.4" height="7.4" rx="1.6" stroke-width="2.4"/></svg>
  <svg style="left:723.0px;top:1578.8px" width="27" height="27" viewBox="0 0 27 27" fill="none" stroke="#f2f2f2" stroke-width="3" stroke-linecap="round"><circle cx="10.6" cy="10.6" r="9.3"/><path d="M17.8 17.8L23.7 23.7" stroke-width="3.4"/><path d="M6.4 10.6H14.8M10.6 6.4V14.8" stroke-width="2.4"/></svg>
</div>
<div id="status">
  <svg style="left:22px;top:18px" width="30" height="19" viewBox="0 0 30 19"><path d="M3.4 0H21.6C22.8 0 23.6 .4 24.4 1.2L29 7.6C30 8.8 30 10.2 29 11.4L24.4 17.8C23.6 18.6 22.8 19 21.6 19H3.4C1.4 19 0 17.6 0 15.6V3.4C0 1.4 1.4 0 3.4 0Z" fill="#3478f6"/></svg>
  <div class="abs" style="left:2180px;top:12px;width:209px;text-align:right;font-size:23px;line-height:30px;color:#989898;font-weight:bold;white-space:pre;letter-spacing:-0.15px">Line: 10  Col: 3</div>
  <div class="abs" style="left:2408px;top:15px;width:2px;height:24px;background:#3a3a3a"></div>
  <svg style="left:2427px;top:14px" width="26" height="26" viewBox="0 0 26 26" fill="none" stroke="#b4b4b4" stroke-width="2">
    <rect x="1" y="1" width="24" height="24" rx="4.6"/>
    <rect x="5.2" y="15.6" width="15.6" height="5.4" rx="1.6" fill="#b4b4b4" stroke="none"/>
  </svg>
</div>
</div>
</body>
</html>
